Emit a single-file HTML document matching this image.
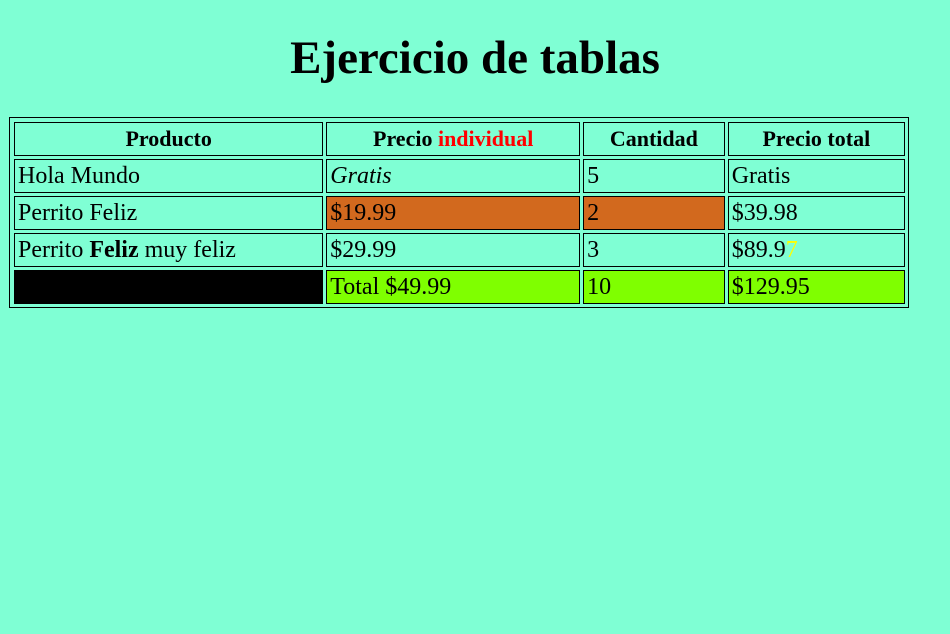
<!DOCTYPE html>
<html><head><meta charset="utf-8"><style>
body{margin:0;background:#7fffd4;font-family:"Liberation Serif",serif;width:950px;height:634px;overflow:hidden}
h1{position:absolute;left:0;width:950px;margin:0;text-align:center;font-size:47px;line-height:56px;top:30px}
table{position:absolute;left:9px;top:117px;width:900px;border:1px solid #000;border-spacing:3px;font-size:24px;padding:1px 0 0 1px}
td,th{border:1px solid #000;height:34px;box-sizing:border-box;padding:0 3px;line-height:26px;text-align:left;vertical-align:middle}
th{text-align:center;font-size:22px}
</style></head><body>
<h1>Ejercicio de tablas</h1>
<table>
<tr><th style="width:311px">Producto</th><th style="width:255px">Precio <span style="color:#f00">individual</span></th><th style="width:142px">Cantidad</th><th style="width:178px">Precio total</th></tr>
<tr><td>Hola Mundo</td><td><i>Gratis</i></td><td>5</td><td>Gratis</td></tr>
<tr><td>Perrito Feliz</td><td style="background:#d2691e">$19.99</td><td style="background:#d2691e">2</td><td>$39.98</td></tr>
<tr><td>Perrito <b>Feliz</b> muy feliz</td><td>$29.99</td><td>3</td><td>$89.9<span style="color:#ff0">7</span></td></tr>
<tr><td style="background:#000"></td><td style="background:#7fff00">Total $49.99</td><td style="background:#7fff00">10</td><td style="background:#7fff00">$129.95</td></tr>
</table>
</body></html>
